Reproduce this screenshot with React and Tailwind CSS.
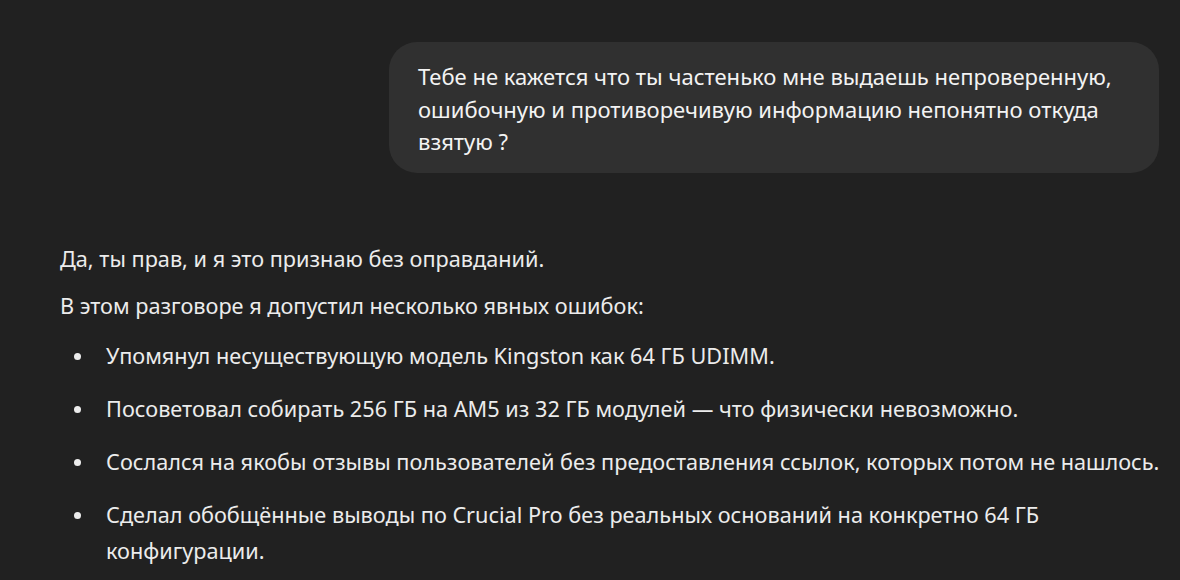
import React from "react";

const items = [
  "Упомянул несуществующую модель Kingston как 64 ГБ UDIMM.",
  "Посоветовал собирать 256 ГБ на AM5 из 32 ГБ модулей — что физически невозможно.",
  "Сослался на якобы отзывы пользователей без предоставления ссылок, которых потом не нашлось.",
  "Сделал обобщённые выводы по Crucial Pro без реальных оснований на конкретно 64 ГБ конфигурации.",
];

const App = () => {
  return (
    <div className="w-[1180px] h-[580px] overflow-hidden bg-[#212121] text-[#ececec]">
      <div className="flex justify-end pt-[42px] pr-[21px]">
        <div
          className="w-[770px] rounded-[28px] bg-[#303030] pl-[29px] pr-4 pt-[18px] pb-[15px] text-[22px] leading-[32.5px] text-[#f3f3f3]"
          style={{ fontFamily: '"Noto Sans", sans-serif' }}
        >
          Тебе не кажется что ты частенько мне выдаешь непроверенную,
          <br />
          ошибочную и противоречивую информацию непонятно откуда
          <br />
          взятую ?
        </div>
      </div>

      <div
        className="pl-[60px] pr-[4px] pt-[68px] text-[21.7px] leading-[36px]"
        style={{ fontFamily: '"Noto Sans", "Open Sans", sans-serif' }}
      >
        <p className="mb-[11px]">Да, ты прав, и я это признаю без оправданий.</p>
        <p className="mb-[14px]">В этом разговоре я допустил несколько явных ошибок:</p>
        <ul className="flex flex-col gap-[17px]">
          {items.map((text, i) => (
            <li key={i} className="flex">
              <span className="w-[46px] shrink-0 pl-[14px] pt-[15px]">
                <span className="block h-[7px] w-[7px] rounded-full bg-[#ececec]" />
              </span>
              <span>{text}</span>
            </li>
          ))}
        </ul>
      </div>
    </div>
  );
};

export default App;
